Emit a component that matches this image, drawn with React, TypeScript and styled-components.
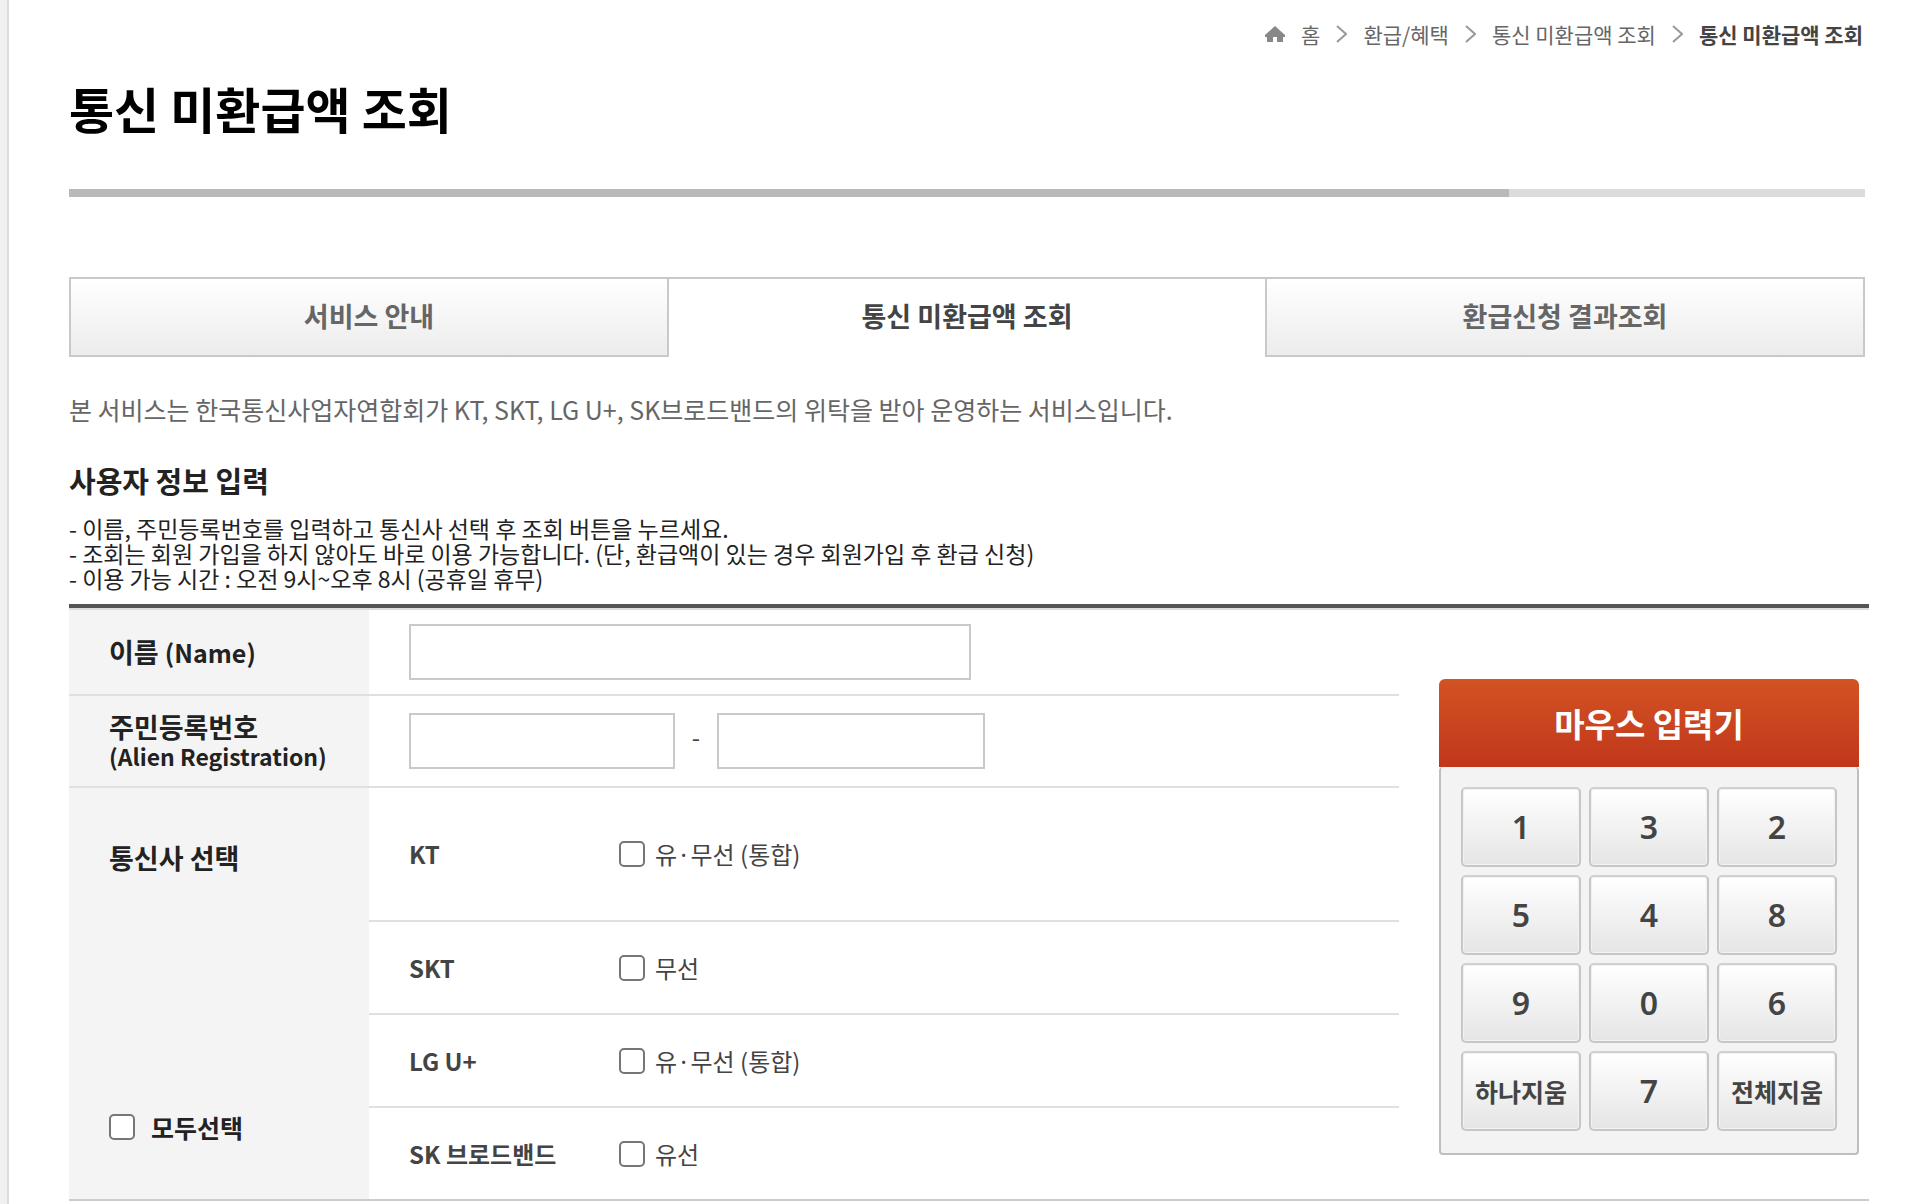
import React, { useState } from "react";
import styled, { createGlobalStyle } from "styled-components";

const GlobalStyle = createGlobalStyle`
  *, *::before, *::after { box-sizing: border-box; }
  body {
    margin: 0;
    background: #fff;
    color: #222;
    font-family: "Noto Sans CJK KR", "Noto Sans", sans-serif;
    font-size: 24px;
    line-height: 30px;
  }
`;

const Page = styled.div`
  display: flex;
  min-height: 100vh;
`;

const SideStrip = styled.aside`
  flex: 0 0 9px;
  background: #f0f0f0;
  border-right: 2px solid #dcdcdc;
`;

const Content = styled.main`
  flex: 1;
  min-width: 0;
  padding: 19px 45px 0 60px;
`;

const Breadcrumb = styled.nav`
  display: flex;
  justify-content: flex-end;
  align-items: center;
  gap: 16px;
  padding-right: 2px;
  font-size: 21px;
`;

const Crumb = styled.a`
  color: #666;
  text-decoration: none;
`;

const CurrentCrumb = styled.strong`
  color: #444;
  font-weight: 700;
`;

const TitleBar = styled.header`
  padding: 29px 0 51px;
`;

const Title = styled.h1`
  margin: 0;
  font-size: 49px;
  line-height: 60px;
  font-weight: 700;
  color: #000;
`;

const Rule = styled.div`
  display: flex;
  height: 8px;
  background: #dcdcdc;
  &::before {
    content: "";
    width: calc(80% + 3px);
    background: #b9b9b9;
  }
`;

const Tabs = styled.nav`
  display: flex;
  margin-top: 80px;
`;

const Tab = styled.button<{ $active?: boolean }>`
  flex: 1;
  height: 80px;
  margin: 0;
  padding: 0 0 2px;
  border: 2px solid #c9c9c9;
  background: ${(p) => (p.$active ? "#fff" : "linear-gradient(#fff, #ececec)")};
  ${(p) => p.$active && "border-color: #c9c9c9 transparent transparent; border-width: 2px 0; "}
  color: ${(p) => (p.$active ? "#444" : "#666")};
  font: inherit;
  font-size: 27px;
  font-weight: 700;
  cursor: pointer;
`;

const Intro = styled.p`
  margin: 37px 0 0;
  color: #666;
  font-size: 25px;
`;

const SectionTitle = styled.h2`
  margin: 41px 0 0;
  font-size: 29px;
  font-weight: 700;
`;

const Notes = styled.ul`
  margin: 21px 0 13px;
  padding: 0;
  list-style: none;
  font-size: 23px;
  line-height: 25px;
`;

const FormTable = styled.table`
  width: calc(100% + 4px);
  table-layout: fixed;
  border-collapse: separate;
  border-spacing: 0;
  border-top: 4px solid #535553;
  border-bottom: 2px solid #ccc;
`;

const HeadCol = styled.col`
  width: 300px;
`;

const PadCol = styled.col`
  width: 470px;
`;

const TopLine = styled.td`
  height: 2px;
  padding: 0;
  background: #ddd;
`;

const HeadCell = styled.th<{ $line?: boolean; $align?: string }>`
  padding: ${(p) => (p.$align ? "56px 0 56px 40px" : "0 0 0 40px")};
  background: #f4f4f4;
  border-bottom: ${(p) => (p.$line ? "2px solid #e0e0e0" : "0")};
  text-align: left;
  vertical-align: ${(p) => p.$align || "middle"};
  font-size: 27px;
  line-height: 28px;
  font-weight: 700;
`;

const Latin = styled.span<{ $small?: boolean }>`
  font-size: ${(p) => (p.$small ? 23 : 25)}px;
`;

const Cell = styled.td<{ $height: number; $line?: boolean }>`
  height: ${(p) => p.$height}px;
  padding: 0 0 0 40px;
  border-bottom: ${(p) => (p.$line ? "2px solid #e0e0e0" : "0")};
  vertical-align: middle;
`;

const Fields = styled.div`
  display: flex;
  align-items: center;
  color: #444;
`;

const TextBox = styled.input<{ $width: number }>`
  width: ${(p) => p.$width}px;
  height: 56px;
  padding: 0 12px;
  border: 2px solid #c9c9c9;
  border-radius: 0;
  background: #fff;
  font: inherit;
  color: #444;
`;

const Dash = styled.span`
  flex: 0 0 42px;
  padding-bottom: 8px;
  text-align: center;
`;

const CarrierName = styled.span`
  flex: 0 0 210px;
  font-weight: 700;
`;

const CheckLabel = styled.label<{ $all?: boolean }>`
  display: inline-flex;
  align-items: center;
  gap: ${(p) => (p.$all ? 16 : 10)}px;
  font-size: ${(p) => (p.$all ? 25 : 24)}px;
`;

const CheckBox = styled.input`
  appearance: none;
  flex: none;
  width: 26px;
  height: 26px;
  margin: 0;
  border: 2px solid #767676;
  border-radius: 5px;
  background: #fff;
  &:checked {
    background: #767676;
    box-shadow: inset 0 0 0 4px #fff;
  }
`;

const PadCell = styled.td`
  padding: 69px 10px 0 40px;
  vertical-align: top;
`;

const PadTitle = styled.h3`
  display: flex;
  align-items: center;
  justify-content: center;
  height: 88px;
  margin: 0;
  border-radius: 6px 6px 0 0;
  background: linear-gradient(#d35324, #c0371a);
  color: #fff;
  font-size: 33px;
  font-weight: 700;
`;

const Keys = styled.div`
  display: grid;
  grid-template-columns: repeat(3, 1fr);
  gap: 8px;
  padding: 20px 20px 22px;
  border: 2px solid #bfbfbf;
  border-top: 0;
  border-radius: 4px;
  background: #f3f3f3;
`;

const Key = styled.button<{ $word?: boolean }>`
  height: 80px;
  padding: 0;
  border: 2px solid #c6c6c6;
  border-top-color: #d0d0d0;
  border-radius: 5px;
  background: linear-gradient(#fff, #e5e5e5);
  box-shadow: inset 0 0 0 1px #f2f2f2;
  color: #444;
  font-family: ${(p) => (p.$word ? '"Noto Sans CJK KR"' : '"Noto Sans"')}, sans-serif;
  font-size: ${(p) => (p.$word ? 25 : 32)}px;
  font-weight: ${(p) => (p.$word ? 700 : 600)};
  line-height: 30px;
  cursor: pointer;
`;

const HomeIcon = () => (
  <svg width="20" height="16" viewBox="0 0 20 16" aria-hidden="true">
    <path d="M10 0 20 9v2h-2v5h-6v-5H8v5H2v-5H0V9z" fill="#888" />
  </svg>
);

const Chevron = () => (
  <svg width="11" height="18" viewBox="0 0 11 18" aria-hidden="true">
    <path d="M1 1l9 8-9 8" fill="none" stroke="#999" strokeWidth="2" />
  </svg>
);

const tabs = ["서비스 안내", "통신 미환급액 조회", "환급신청 결과조회"];
const notes = [
  "- 이름, 주민등록번호를 입력하고 통신사 선택 후 조회 버튼을 누르세요.",
  "- 조회는 회원 가입을 하지 않아도 바로 이용 가능합니다. (단, 환급액이 있는 경우 회원가입 후 환급 신청)",
  "- 이용 가능 시간 : 오전 9시~오후 8시 (공휴일 휴무)",
];
const carriers = [
  { name: "KT", option: "유·무선 (통합)", height: 134 },
  { name: "SKT", option: "무선", height: 93 },
  { name: "LG U+", option: "유·무선 (통합)", height: 93 },
  { name: "SK 브로드밴드", option: "유선", height: 91 },
];
const ERASE_ONE = "하나지움";
const ERASE_ALL = "전체지움";
const keys = ["1", "3", "2", "5", "4", "8", "9", "0", "6", ERASE_ONE, "7", ERASE_ALL];

export default function App() {
  const [active, setActive] = useState(1);
  const [back, setBack] = useState("");
  const [checked, setChecked] = useState<boolean[]>(carriers.map(() => false));

  const press = (key: string) => {
    if (key === ERASE_ALL) setBack("");
    else if (key === ERASE_ONE) setBack(back.slice(0, -1));
    else setBack((back + key).slice(0, 7));
  };

  return (
    <>
      <GlobalStyle />
      <Page>
        <SideStrip />
        <Content>
          <Breadcrumb>
            <HomeIcon />
            <Crumb href="#home">홈</Crumb>
            <Chevron />
            <Crumb href="#refund">환급/혜택</Crumb>
            <Chevron />
            <Crumb href="#telecom">통신 미환급액 조회</Crumb>
            <Chevron />
            <CurrentCrumb>통신 미환급액 조회</CurrentCrumb>
          </Breadcrumb>
          <TitleBar>
            <Title>통신 미환급액 조회</Title>
          </TitleBar>
          <Rule />
          <Tabs>
            {tabs.map((tab, i) => (
              <Tab key={tab} type="button" $active={i === active} onClick={() => setActive(i)}>
                {tab}
              </Tab>
            ))}
          </Tabs>
          <Intro>본 서비스는 한국통신사업자연합회가 KT, SKT, LG U+, SK브로드밴드의 위탁을 받아 운영하는 서비스입니다.</Intro>
          <SectionTitle>사용자 정보 입력</SectionTitle>
          <Notes>
            {notes.map((note) => (
              <li key={note}>{note}</li>
            ))}
          </Notes>
          <FormTable>
            <colgroup>
              <HeadCol />
              <col />
              <PadCol />
            </colgroup>
            <tbody>
              <tr>
                <TopLine colSpan={3} />
              </tr>
              <tr>
                <HeadCell scope="row" $line>
                  <label htmlFor="name">
                    이름 <Latin>(Name)</Latin>
                  </label>
                </HeadCell>
                <Cell $height={86} $line>
                  <Fields>
                    <TextBox id="name" type="text" $width={562} />
                  </Fields>
                </Cell>
                <PadCell rowSpan={6}>
                  <PadTitle>마우스 입력기</PadTitle>
                  <Keys>
                    {keys.map((key) => (
                      <Key key={key} type="button" $word={key.length > 1} onClick={() => press(key)}>
                        {key}
                      </Key>
                    ))}
                  </Keys>
                </PadCell>
              </tr>
              <tr>
                <HeadCell scope="row" $line>
                  <label htmlFor="front">
                    주민등록번호
                    <br />
                    <Latin $small>(Alien Registration)</Latin>
                  </label>
                </HeadCell>
                <Cell $height={92} $line>
                  <Fields>
                    <TextBox id="front" type="text" maxLength={6} $width={266} />
                    <Dash>-</Dash>
                    <TextBox
                      type="password"
                      aria-label="주민등록번호 뒷자리"
                      maxLength={7}
                      value={back}
                      onChange={(e) => setBack(e.target.value)}
                      $width={268}
                    />
                  </Fields>
                </Cell>
              </tr>
              {carriers.map((carrier, i) => (
                <tr key={carrier.name}>
                  {i === 0 && (
                    <HeadCell scope="rowgroup" rowSpan={2} $align="top">
                      통신사 선택
                    </HeadCell>
                  )}
                  {i === 2 && (
                    <HeadCell rowSpan={2} $align="bottom">
                      <CheckLabel $all>
                        <CheckBox
                          type="checkbox"
                          checked={checked.every(Boolean)}
                          onChange={(e) => setChecked(carriers.map(() => e.target.checked))}
                        />
                        모두선택
                      </CheckLabel>
                    </HeadCell>
                  )}
                  <Cell $height={carrier.height} $line={i < 3}>
                    <Fields>
                      <CarrierName>{carrier.name}</CarrierName>
                      <CheckLabel>
                        <CheckBox
                          type="checkbox"
                          checked={checked[i]}
                          onChange={(e) => setChecked(checked.map((c, n) => (n === i ? e.target.checked : c)))}
                        />
                        {carrier.option}
                      </CheckLabel>
                    </Fields>
                  </Cell>
                </tr>
              ))}
            </tbody>
          </FormTable>
        </Content>
      </Page>
    </>
  );
}
